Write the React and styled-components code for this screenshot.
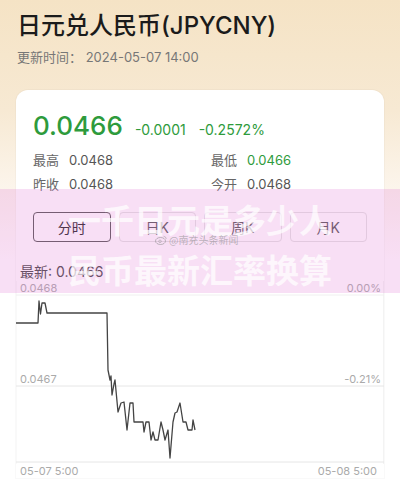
import React from 'react';
import styled, { createGlobalStyle } from 'styled-components';

const GlobalStyle = createGlobalStyle`
  html, body {
    margin: 0;
    padding: 0;
    background: #fff;
  }
  body {
    font-family: "Inter", "Noto Sans CJK SC", sans-serif;
  }
`;

const Page = styled.div`
  position: relative;
  width: 400px;
  height: 483px;
  overflow: hidden;
  background: linear-gradient(180deg, #f5e3c5 0%, #f7e9d3 110px, #fcf5ec 190px, #ffffff 260px);
`;

const Header = styled.div`
  padding: 10px 17px 0;
`;

const Title = styled.h1`
  margin: 0;
  font-size: 24px;
  line-height: 32px;
  font-weight: 500;
  color: #1b1b1b;
  font-family: "Inter", "Noto Sans CJK SC", sans-serif;
`;

const Updated = styled.div`
  margin-top: 5px;
  font-size: 13px;
  line-height: 20px;
  color: #777;
`;

const Card = styled.div`
  margin: 23px 16px 0;
  background: #fff;
  border-radius: 12px 12px 0 0;
  box-shadow: 0 0 0 1px rgba(0, 0, 0, 0.025);
`;

const Quote = styled.div`
  padding: 18px 17px 0;
`;

const PriceRow = styled.div`
  display: flex;
  align-items: baseline;
  height: 36px;
  line-height: 36px;
  color: #2e9b3c;
`;

const Price = styled.span`
  font-size: 26px;
  font-weight: 500;
  margin-right: 12px;
`;

const Change = styled.span`
  font-size: 14px;
  margin-right: 13px;
`;

const Stats = styled.div`
  display: grid;
  grid-template-columns: 178px 1fr;
  margin-top: 4px;
`;

const Stat = styled.div`
  display: flex;
  gap: 10px;
  font-size: 13px;
  line-height: 24px;
`;

const StatLabel = styled.span`
  color: #666;
`;

const StatValue = styled.span`
  color: ${(p) => (p.$down ? '#2e9b3c' : '#555')};
`;

const Tabs = styled.div`
  display: grid;
  grid-template-columns: repeat(4, 1fr);
  gap: 8px;
  margin-top: 16px;
`;

const Tab = styled.div`
  height: 30px;
  box-sizing: border-box;
  border: 1px solid ${(p) => (p.$active ? '#555' : '#e2e2e2')};
  border-radius: 4px;
  display: flex;
  align-items: center;
  justify-content: center;
  font-size: 14px;
  color: ${(p) => (p.$active ? '#222' : '#555')};
`;

const ChartSection = styled.div`
  padding-top: 21px;
`;

const Latest = styled.div`
  padding-left: 4px;
  font-size: 14px;
  line-height: 18px;
  color: #444;
`;

const ChartSvg = styled.svg`
  display: block;
  font-family: "Inter", sans-serif;
`;

const AxisRow = styled.div`
  display: flex;
  justify-content: space-between;
  padding: 0 7px 0 4px;
  font-size: 11px;
  line-height: 14px;
  color: #aaa;
`;

const Banner = styled.div`
  position: absolute;
  left: 0;
  right: 0;
  top: 189px;
  height: 104px;
  background: rgba(225, 120, 215, 0.24);
  display: flex;
  flex-direction: column;
  align-items: center;
  justify-content: center;
  padding-top: 6px;
  box-sizing: border-box;
`;

const BannerLine = styled.div`
  font-family: "Noto Sans CJK SC", sans-serif;
  font-weight: 700;
  font-size: 33px;
  line-height: 50px;
  letter-spacing: 0;
  color: rgba(255, 255, 255, 0.72);
`;

const Watermark = styled.div`
  position: absolute;
  left: 155px;
  top: 233px;
  display: flex;
  align-items: center;
  gap: 2px;
  font-family: "Noto Sans CJK SC", sans-serif;
  font-size: 10px;
  line-height: 14px;
  color: rgba(140, 140, 140, 0.55);
`;

const points = [
  [0, 42], [22, 42], [23, 20], [24.5, 33], [26, 22], [29, 22], [31, 32], [91, 32],
  [92, 89], [94, 99], [95, 95], [96, 114], [98, 103], [99, 99], [102, 131], [105, 122],
  [108, 121], [111, 149], [114, 122], [117, 122], [118, 141], [127, 141], [128, 151],
  [130, 141], [133, 141], [135, 159], [137, 151], [139, 159], [142, 159], [145, 141],
  [147, 149], [149, 159], [152, 149], [154, 177], [157, 141], [159, 132], [161, 131],
  [164, 122], [167, 141], [170, 141], [172, 149], [176, 149], [177, 139], [179, 149],
];

const Chart = () => (
  <ChartSvg width="368" height="183" viewBox="0 0 368 183">
    <line x1="0" y1="0" x2="0" y2="183" stroke="#f3f3f3" />
    <line x1="367.5" y1="0" x2="367.5" y2="183" stroke="#f3f3f3" />
    <line x1="0" y1="14" x2="368" y2="14" stroke="#f0f0f0" />
    <line x1="0" y1="105" x2="368" y2="105" stroke="#e6e6e6" />
    <line x1="0" y1="181" x2="368" y2="181" stroke="#e6e6e6" />
    <text x="4" y="11" fontSize="11" fill="#aaa">0.0468</text>
    <text x="365" y="11" fontSize="11" fill="#aaa" textAnchor="end">0.00%</text>
    <text x="4" y="102" fontSize="11" fill="#aaa">0.0467</text>
    <text x="365" y="102" fontSize="11" fill="#aaa" textAnchor="end">-0.21%</text>
    <polyline
      points={points.map((p) => p.join(',')).join(' ')}
      fill="none"
      stroke="#444"
      strokeWidth="1.3"
      strokeLinejoin="round"
    />
  </ChartSvg>
);

const WeiboMark = () => (
  <svg width="12" height="10" viewBox="0 0 12 10">
    <ellipse cx="5.5" cy="6" rx="5" ry="3.5" fill="none" stroke="currentColor" strokeWidth="1" />
    <circle cx="5" cy="6.3" r="1.3" fill="none" stroke="currentColor" strokeWidth="0.8" />
    <path d="M8.5 1.2 A3 3 0 0 1 11.3 4" fill="none" stroke="currentColor" strokeWidth="0.8" />
  </svg>
);

const tabs = ['分时', '日K', '周K', '月K'];

const App = () => (
  <Page>
    <GlobalStyle />
    <Header>
      <Title>日元兑人民币(JPYCNY)</Title>
      <Updated>更新时间： 2024-05-07 14:00</Updated>
    </Header>
    <Card>
      <Quote>
        <PriceRow>
          <Price>0.0466</Price>
          <Change>-0.0001</Change>
          <Change>-0.2572%</Change>
        </PriceRow>
        <Stats>
          <Stat><StatLabel>最高</StatLabel><StatValue>0.0468</StatValue></Stat>
          <Stat><StatLabel>最低</StatLabel><StatValue $down>0.0466</StatValue></Stat>
          <Stat><StatLabel>昨收</StatLabel><StatValue>0.0468</StatValue></Stat>
          <Stat><StatLabel>今开</StatLabel><StatValue>0.0468</StatValue></Stat>
        </Stats>
        <Tabs>
          {tabs.map((t, i) => (
            <Tab key={t} $active={i === 0}>{t}</Tab>
          ))}
        </Tabs>
      </Quote>
      <ChartSection>
        <Latest>最新: 0.0466</Latest>
        <Chart />
        <AxisRow>
          <span>05-07 5:00</span>
          <span>05-08 5:00</span>
        </AxisRow>
      </ChartSection>
    </Card>
    <Banner>
      <BannerLine>一千日元是多少人</BannerLine>
      <BannerLine>民币最新汇率换算</BannerLine>
    </Banner>
    <Watermark>
      <WeiboMark />
      <span>@南充头条新闻</span>
    </Watermark>
  </Page>
);

export default App;
